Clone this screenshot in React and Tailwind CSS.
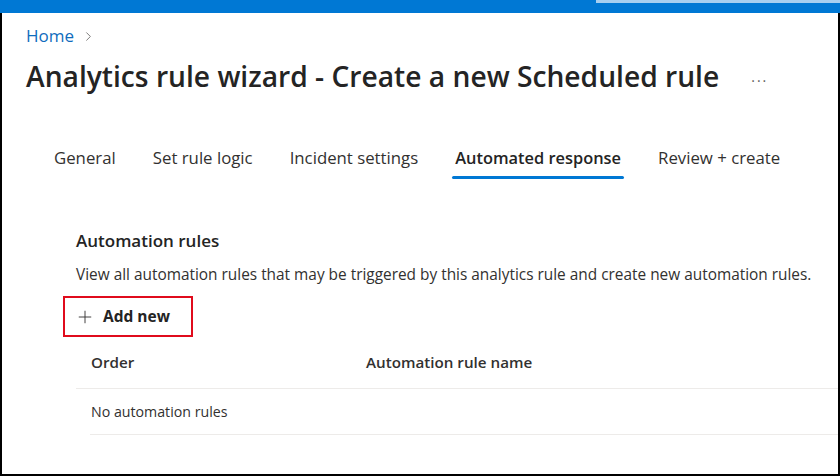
import { Plus, ChevronRight } from 'lucide-react';

const TABS = ['General', 'Set rule logic', 'Incident settings', 'Automated response', 'Review + create'];
const ACTIVE = 'Automated response';

export default function App() {
  return (
    <div
      className="h-[476px] w-[840px] overflow-hidden bg-white text-[#323130]"
      style={{ fontFamily: '"Open Sans", "Noto Sans", sans-serif' }}
    >
      {/* top bar */}
      <div className="flex h-[13px] flex-col bg-[#0078d4]">
        <div className="ml-[596px] h-[3px] bg-[#a7cff0]" />
      </div>

      <div className="h-[463px] border-x-2 border-b-2 border-black">
        {/* breadcrumb */}
        <div className="flex items-center gap-[7px] pl-[24px] pt-[10px] text-[17px] leading-[26px] text-[#0f6cbd]">
          <span>Home</span>
          <ChevronRight size={15} strokeWidth={1.3} className="text-[#605e5c]" />
        </div>

        {/* title */}
        <div className="mt-[7px] flex items-center pl-[24px]">
          <h1 className="text-[28.2px] font-semibold leading-[40px] text-[#242424]">
            Analytics rule wizard - Create a new Scheduled rule
          </h1>
          <span className="ml-[32px] text-[14px] tracking-[2px] text-[#605e5c]">...</span>
        </div>

        {/* tabs */}
        <div className="mt-[50px] flex pl-[52px] text-[16.8px] leading-[24px]">
          {TABS.map((t) => (
            <div key={t} className="mr-[37px] flex flex-col items-center">
              <span
                className={
                  t === ACTIVE ? 'text-[16.4px] font-semibold text-[#242424]' : 'text-[#323130]'
                }
              >
                {t}
              </span>
              <div
                className={
                  t === ACTIVE
                    ? 'mt-[6px] h-[3px] w-[calc(100%+6px)] rounded-sm bg-[#0078d4]'
                    : 'mt-[6px] h-[3px]'
                }
              />
            </div>
          ))}
        </div>

        {/* automation rules */}
        <div className="mt-[50px] pl-[74px]">
          <div className="text-[17px] font-semibold leading-[24px] text-[#242424]">Automation rules</div>
          <p className="mt-[11px] text-[15.4px] leading-[22px] text-[#323130]">
            View all automation rules that may be triggered by this analytics rule and create new automation rules.
          </p>

          <div className="-ml-[13px] mt-[10px] flex h-[41px] w-[130px] items-center gap-[8px] border-2 border-[#e00b1c] pl-[10px]">
            <Plus size={20} strokeWidth={1.1} className="text-[#323130]" />
            <span className="text-[15.5px] font-bold text-[#242424]">Add new</span>
          </div>

          {/* table */}
          <div className="flex h-[52px] items-center border-b border-[#edebe9] text-[15.2px] font-semibold text-[#323130]">
            <span className="w-[290px] pl-[15px]">Order</span>
            <span>Automation rule name</span>
          </div>
          <div className="ml-[14px] flex h-[46px] items-center border-b border-[#edebe9] pl-[1px] text-[14.2px] text-[#323130]">
            No automation rules
          </div>
        </div>
      </div>
    </div>
  );
}
